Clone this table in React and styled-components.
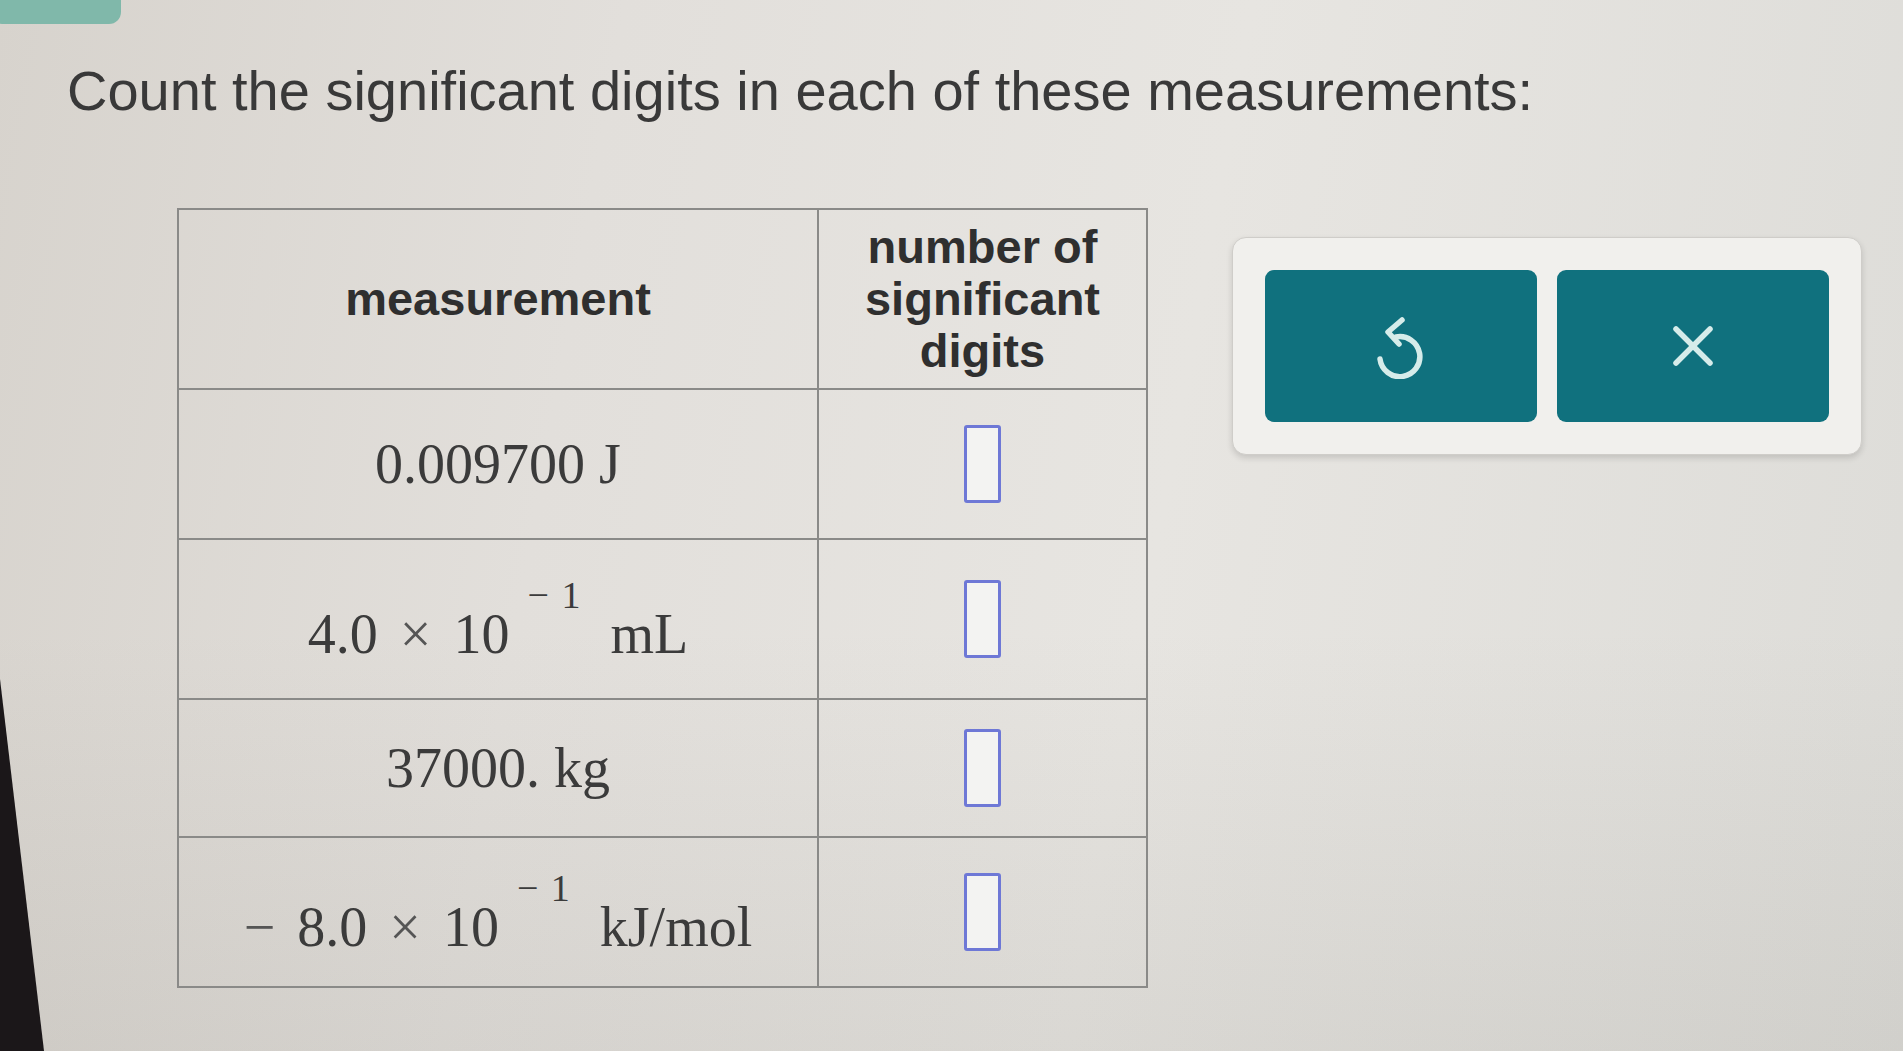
import React from 'react'
import styled, { createGlobalStyle } from 'styled-components'

const GlobalStyle = createGlobalStyle`
  html, body {
    margin: 0;
    padding: 0;
  }
  body {
    font-family: "Liberation Sans", Arial, sans-serif;
    background: #e2dfdb;
  }
`

const rows = [
  { h: 150, value: <Plain>0.009700 J</Plain> },
  { h: 160, value: <Sci mant="4.0" exp="1" unit="mL" /> },
  { h: 138, value: <Plain>37000. kg</Plain> },
  { h: 150, value: <Sci negative mant="8.0" exp="1" unit="kJ/mol" /> },
]

function Plain({ children }) {
  return <Value>{children}</Value>
}

function Sci({ negative, mant, exp, unit }) {
  return (
    <Value>
      {negative && <Lead>−</Lead>}
      {mant}
      <Times>×</Times>
      10
      <Sup>− {exp}</Sup>
      {unit}
    </Value>
  )
}

export default function App() {
  return (
    <Page>
      <GlobalStyle />
      <TopTab />
      <Bezel />

      <Heading>Count the significant digits in each of these measurements:</Heading>

      <Content>
        <Table>
          <thead>
            <tr>
              <HeadCell $w={638}>measurement</HeadCell>
              <HeadCell $w={327}>
                number of
                <br />
                significant
                <br />
                digits
              </HeadCell>
            </tr>
          </thead>
          <tbody>
            {rows.map((r, i) => (
              <Row key={i} $h={r.h}>
                <Cell>{r.value}</Cell>
                <Cell>
                  <AnswerBox />
                </Cell>
              </Row>
            ))}
          </tbody>
        </Table>

        <ButtonPanel>
          <ActionButton aria-label="undo">
            <svg width="54" height="66" viewBox="24 14 54 66" fill="none" stroke="#d6ecea" strokeWidth="5.5" strokeLinecap="round" strokeLinejoin="round">
              <path d="M46 38 A20 20 0 1 1 30 60" />
              <path d="M52 21 L38 33 L49 45" />
            </svg>
          </ActionButton>
          <ActionButton aria-label="clear">
            <svg width="44" height="44" viewBox="0 0 44 44" fill="none" stroke="#d6ecea" strokeWidth="5.5" strokeLinecap="round">
              <path d="M5 5 L39 39" />
              <path d="M39 5 L5 39" />
            </svg>
          </ActionButton>
        </ButtonPanel>
      </Content>
    </Page>
  )
}

const Page = styled.div`
  position: relative;
  width: 100%;
  height: 1051px;
  overflow: hidden;
  box-sizing: border-box;
  padding: 59px 0 0 67px;
  background:
    linear-gradient(180deg, rgba(255, 255, 255, 0) 60%, rgba(120, 118, 110, 0.12) 100%),
    linear-gradient(100deg, #d7d3cd 0%, #e2dfdb 30%, #e7e5e1 60%, #dddcd8 100%);
`

const TopTab = styled.div`
  position: absolute;
  top: -14px;
  left: -10px;
  width: 131px;
  height: 38px;
  border-radius: 12px;
  background: #80b8aa;
`

const Bezel = styled.div`
  position: absolute;
  left: 0;
  bottom: 0;
  width: 44px;
  height: 372px;
  background: #1b1719;
  clip-path: polygon(0 0, 100% 100%, 0 100%);
`

const Heading = styled.h1`
  margin: 0;
  font-family: "Liberation Sans", Arial, sans-serif;
  font-weight: 400;
  font-size: 56px;
  line-height: 64px;
  color: #393939;
  white-space: nowrap;
`

const Content = styled.div`
  display: flex;
  align-items: flex-start;
  gap: 84px;
  margin-top: 85px;
  padding-left: 110px;
`

const Table = styled.table`
  border-collapse: collapse;
  border: 2px solid #8a8a88;
`

const HeadCell = styled.th`
  width: ${p => p.$w}px;
  height: 178px;
  padding: 0;
  border: 2px solid #8a8a88;
  font-family: "Liberation Sans", Arial, sans-serif;
  font-weight: 700;
  font-size: 47px;
  line-height: 52px;
  color: #2f2f2f;
  text-align: center;
  vertical-align: middle;
`

const Row = styled.tr`
  height: ${p => p.$h}px;
`

const Cell = styled.td`
  padding: 0;
  border: 2px solid #8a8a88;
  text-align: center;
  vertical-align: middle;
`

const Value = styled.span`
  display: inline-block;
  font-family: "Liberation Serif", "Times New Roman", serif;
  font-size: 56px;
  color: #3b3b3b;
  white-space: nowrap;
`

const Lead = styled.span`
  margin-right: 22px;
  color: #555;
`

const Times = styled.span`
  margin: 0 22px;
  color: #555;
`

const Sup = styled.span`
  font-size: 38px;
  vertical-align: 45px;
  word-spacing: 3px;
  margin-left: 18px;
  margin-right: 30px;
`

const AnswerBox = styled.span`
  display: inline-block;
  box-sizing: border-box;
  width: 37px;
  height: 78px;
  border: 3px solid #6e78d6;
  border-radius: 3px;
  background: #f3f3f2;
  vertical-align: middle;
`

const ButtonPanel = styled.div`
  display: flex;
  gap: 20px;
  margin-top: 29px;
  padding: 32px;
  border: 1px solid #cfcdc9;
  border-radius: 14px;
  background: #f1f0ed;
  box-shadow: 0 3px 6px rgba(0, 0, 0, 0.14);
`

const ActionButton = styled.button`
  display: flex;
  justify-content: center;
  align-items: center;
  width: 272px;
  height: 152px;
  padding: 0;
  border: none;
  border-radius: 9px;
  background: #10717e;
  cursor: pointer;
`
